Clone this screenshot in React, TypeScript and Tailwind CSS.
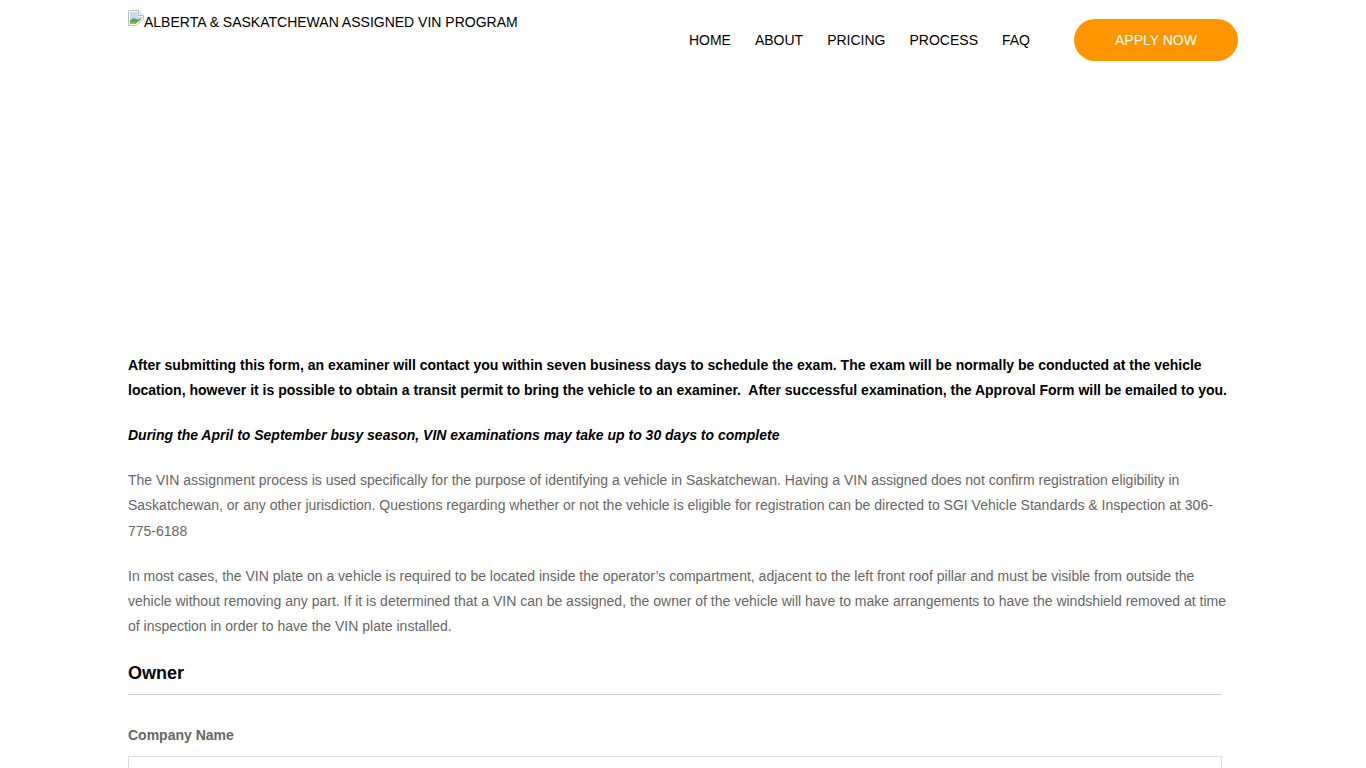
const NAV_LINKS = ["HOME", "ABOUT", "PRICING", "PROCESS", "FAQ"];

function BrokenImageIcon() {
  return (
    <svg width="16" height="16" viewBox="0 0 16 16" className="shrink-0">
      <path d="M0.5 0.5H10.5L15.5 5.5V9L8 15.5H0.5Z" fill="#ffffff" stroke="#bdbdbd" />
      <path d="M10.5 0.5V5.5H15.5" fill="#ececec" stroke="#bdbdbd" />
      <path d="M2 2H9.5V6.5H14V8.5L8 12H2Z" fill="#c9d7f4" />
      <path d="M2 14V10.5L5.5 8L9.5 9.5L14 8.5L7.5 14Z" fill="#5fa83c" />
      <path d="M2 14V12.5H8.5L7.5 14Z" fill="#8cc152" />
    </svg>
  );
}

function Header() {
  return (
    <header className="flex h-20 items-start justify-between">
      <a href="#" className="mt-[10px] flex items-start text-sm leading-[16px] text-black">
        <BrokenImageIcon />
        <span className="mt-1">ALBERTA &amp; SASKATCHEWAN ASSIGNED VIN PROGRAM</span>
      </a>
      <nav className="mt-[19px] flex items-center">
        <ul className="mr-11 flex gap-6">
          {NAV_LINKS.map((label) => (
            <li key={label}>
              <a href="#" className="text-sm text-black">
                {label}
              </a>
            </li>
          ))}
        </ul>
        <a
          href="#"
          className="flex h-[42px] w-[164px] items-center justify-center rounded-full bg-[#ff9600] text-sm text-white"
        >
          APPLY NOW
        </a>
      </nav>
    </header>
  );
}

export default function App() {
  return (
    <div className="h-[768px] overflow-hidden bg-white font-['Liberation_Sans',Arial,sans-serif]">
      <div className="mx-auto w-[1110px]">
        <Header />
        <main className="pt-[272.6px] text-sm leading-[25.2px] text-[#666666]">
          <p className="mb-5 font-bold text-black">
            After submitting this form, an examiner will contact you within seven business days to schedule the exam. The exam will be normally be conducted at the vehicle location, however it is possible to obtain a transit permit to bring the vehicle to an examiner.&nbsp; After successful examination, the Approval Form will be emailed to you.
          </p>
          <p className="mb-5 font-bold italic text-black">
            During the April to September busy season, VIN examinations may take up to 30 days to complete
          </p>
          <p className="mb-5">
            The VIN assignment process is used specifically for the purpose of identifying a vehicle in Saskatchewan. Having a VIN assigned does not confirm registration eligibility in Saskatchewan, or any other jurisdiction. Questions regarding whether or not the vehicle is eligible for registration can be directed to SGI Vehicle Standards &amp; Inspection at 306-775-6188
          </p>
          <p className="mb-5">
            In most cases, the VIN plate on a vehicle is required to be located inside the operator’s compartment, adjacent to the left front roof pillar and must be visible from outside the vehicle without removing any part. If it is determined that a VIN can be assigned, the owner of the vehicle will have to make arrangements to have the windshield removed at time of inspection in order to have the VIN plate installed.
          </p>
          <div className="w-[1094px]">
            <h3 className="mt-[22px] border-b border-[#cccccc] pb-[9px] text-lg font-bold leading-[24px] text-black">
              Owner
            </h3>
            <label className="mt-[28px] block font-bold leading-[25px] text-[#666666]">Company Name</label>
            <input type="text" className="mt-[8px] block h-10 w-full border border-[#dddddd] bg-white" />
          </div>
        </main>
      </div>
    </div>
  );
}
